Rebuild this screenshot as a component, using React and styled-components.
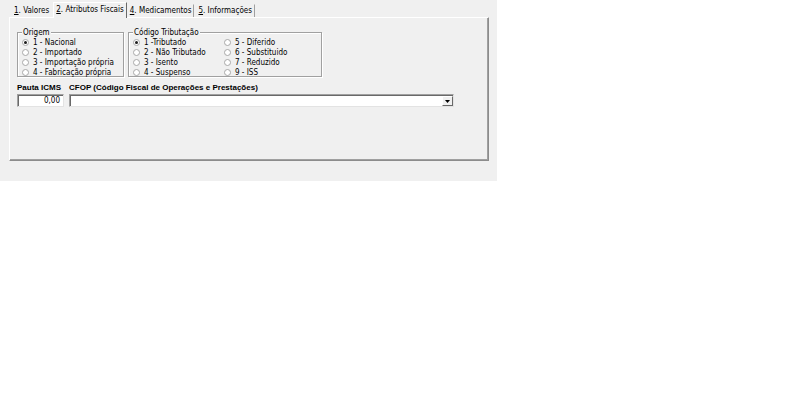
import styled, { createGlobalStyle } from "styled-components";

const GlobalStyle = createGlobalStyle`
  body {
    margin: 0;
    background: #ffffff;
    font-family: "DejaVu Sans Condensed", "Liberation Sans", Arial, sans-serif;
    font-size: 8px;
    color: #000;
  }
`;

const Window = styled.div`
  width: 497px;
  height: 181px;
  background: #f0f0f0;
  box-sizing: border-box;
  padding-top: 2px;
`;

const TabStrip = styled.div`
  display: flex;
  align-items: flex-end;
  height: 15px;
  padding-left: 11px;
`;

const Tab = styled.div`
  position: relative;
  box-sizing: border-box;
  height: ${(p) => (p.$active ? "16px" : "13px")};
  line-height: ${(p) => (p.$active ? "14px" : "12px")};
  margin-bottom: ${(p) => (p.$active ? "-1px" : "0")};
  padding: 0 2px;
  background: #f0f0f0;
  white-space: nowrap;
  z-index: ${(p) => (p.$active ? 1 : 0)};
  border-top: 1px solid ${(p) => (p.$active ? "#ffffff" : "transparent")};
  border-left: 1px solid ${(p) => (p.$active ? "#ffffff" : "transparent")};
  border-right: 1px solid
    ${(p) => (p.$active ? "#696969" : p.$sep ? "#a0a0a0" : "transparent")};
  margin-right: ${(p) => (p.$active ? "0" : "1px")};

  u {
    text-decoration: underline;
  }
`;

const Panel = styled.div`
  margin-left: 9px;
  width: 480px;
  height: 144px;
  box-sizing: border-box;
  border-top: 1px solid #ffffff;
  border-left: 1px solid #ffffff;
  border-right: 1px solid #8c8c8c;
  border-bottom: 1px solid #8c8c8c;
  box-shadow: inset -1px -1px 0 #a0a0a0;
  padding: 14px 0 0 7px;
`;

const GroupRow = styled.div`
  display: flex;
  gap: 4px;
`;

const Group = styled.div`
  position: relative;
  width: ${(p) => p.$width}px;
  box-sizing: border-box;
  height: 45px;
  border: 1px solid #a0a0a0;
  box-shadow: inset 1px 1px 0 #ffffff, 1px 1px 0 #ffffff;
  padding-top: 4px;
  display: grid;
  grid-template-columns: ${(p) => p.$cols || "1fr"};
  grid-template-rows: repeat(4, 10px);
  grid-auto-flow: column;
`;

const Legend = styled.span`
  position: absolute;
  top: -6px;
  left: 4px;
  padding: 0 1px;
  line-height: 11px;
  background: #f0f0f0;
`;

const RadioRow = styled.label`
  display: flex;
  align-items: center;
  height: 10px;
  padding-left: 4px;
  gap: 4px;
  white-space: nowrap;
`;

const RadioDot = styled.span`
  width: 7px;
  height: 7px;
  box-sizing: border-box;
  border-radius: 50%;
  border: 1px solid #a8a8a8;
  background: #ffffff;
  display: flex;
  align-items: center;
  justify-content: center;

  &::after {
    content: "";
    width: 3px;
    height: 3px;
    border-radius: 50%;
    background: ${(p) => (p.$checked ? "#1a1a1a" : "transparent")};
  }
`;

const FieldRow = styled.div`
  display: flex;
  gap: 5px;
  margin-top: 5px;
`;

const Field = styled.div`
  display: flex;
  flex-direction: column;
  gap: 1px;
  width: ${(p) => p.$width}px;
`;

const FieldLabel = styled.div`
  font-family: "Liberation Sans", Arial, sans-serif;
  font-weight: bold;
  line-height: 11px;
  white-space: nowrap;
`;

const TextBox = styled.div`
  height: 13px;
  box-sizing: border-box;
  background: #ffffff;
  border-top: 1px solid #a0a0a0;
  border-left: 1px solid #a0a0a0;
  border-right: 1px solid #e3e3e3;
  border-bottom: 1px solid #e3e3e3;
  box-shadow: inset 1px 1px 0 #696969;
  text-align: right;
  padding-right: 3px;
  line-height: 11px;
`;

const Combo = styled(TextBox)`
  display: flex;
  justify-content: flex-end;
  padding: 1px 0 0 0;
`;

const DropButton = styled.div`
  width: 11px;
  height: 10px;
  box-sizing: border-box;
  background: #f0f0f0;
  border-top: 1px solid #ffffff;
  border-left: 1px solid #ffffff;
  border-right: 1px solid #696969;
  border-bottom: 1px solid #696969;
  display: flex;
  align-items: center;
  justify-content: center;
`;

const Radio = ({ checked, children }) => (
  <RadioRow>
    <RadioDot $checked={checked} />
    {children}
  </RadioRow>
);

export default function App() {
  return (
    <>
      <GlobalStyle />
      <Window>
        <TabStrip>
          <Tab><u>1</u>. Valores</Tab>
          <Tab $active><u>2</u>. Atributos Fiscais</Tab>
          <Tab $sep><u>4</u>. Medicamentos</Tab>
          <Tab $sep><u>5</u>. Informações</Tab>
        </TabStrip>
        <Panel>
          <GroupRow>
            <Group $width={107}>
              <Legend>Origem</Legend>
              <Radio checked>1 - Nacional</Radio>
              <Radio>2 - Importado</Radio>
              <Radio>3 - Importação própria</Radio>
              <Radio>4 - Fabricação própria</Radio>
            </Group>
            <Group $width={194} $cols="91px 1fr">
              <Legend>Código Tributação</Legend>
              <Radio checked>1 -Tributado</Radio>
              <Radio>2 - Não Tributado</Radio>
              <Radio>3 - Isento</Radio>
              <Radio>4 - Suspenso</Radio>
              <Radio>5 - Diferido</Radio>
              <Radio>6 - Substituido</Radio>
              <Radio>7 - Reduzido</Radio>
              <Radio>9 - ISS</Radio>
            </Group>
          </GroupRow>
          <FieldRow>
            <Field $width={47}>
              <FieldLabel>Pauta ICMS</FieldLabel>
              <TextBox>0,00</TextBox>
            </Field>
            <Field $width={385}>
              <FieldLabel>CFOP (Código Fiscal de Operações e Prestações)</FieldLabel>
              <Combo>
                <DropButton>
                  <svg width="5" height="3" viewBox="0 0 5 3">
                    <path d="M0 0h5L2.5 3z" fill="#000" />
                  </svg>
                </DropButton>
              </Combo>
            </Field>
          </FieldRow>
        </Panel>
      </Window>
    </>
  );
}
